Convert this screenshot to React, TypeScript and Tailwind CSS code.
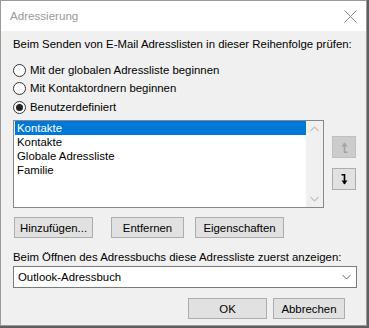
import React from "react";

const font = { fontFamily: '"Segoe UI", "Liberation Sans", Arial, sans-serif' };

function Radio({ checked, label }: { checked?: boolean; label: string }) {
  return (
    <div className="flex h-[18px] items-center">
      <span className="flex h-[13px] w-[13px] items-center justify-center rounded-full border border-[#333] bg-white">
        {checked && <span className="h-[7px] w-[7px] rounded-full bg-[#222]" />}
      </span>
      <span className="ml-[4px]">{label}</span>
    </div>
  );
}

function Btn({ children, w }: { children: React.ReactNode; w: string }) {
  return (
    <div
      className={`flex h-[21px] items-center justify-center border border-[#adadad] bg-[#e1e1e1] ${w}`}
    >
      {children}
    </div>
  );
}

// arrow with a small hook at the tail, drawn pointing down
function MoveArrow({ color, up }: { color: string; up?: boolean }) {
  return (
    <svg width="7" height="11" viewBox="0 0 7 11" className={up ? "rotate-180" : ""}>
      <path d="M0.5 0.8 H3.5 V10" fill="none" stroke={color} strokeWidth="1.6" />
      <path d="M0.5 6.5 L3.5 10.5 L6.5 6.5 Z" fill={color} />
    </svg>
  );
}

export default function App() {
  return (
    <div
      className="h-[328px] w-[369px] whitespace-nowrap bg-[#5f5f5f] text-[11.4px] leading-[16px] text-black"
      style={font}
    >
      <div className="flex h-[326px] w-[367px] flex-col border border-[#9a9a9a] bg-[#f0f0f0]">
        {/* title bar */}
        <div className="flex h-[30px] items-center justify-between bg-white pl-[9px] pr-[8px]">
          <span className="text-[11.6px] text-[#999]">Adressierung</span>
          <svg width="13" height="13" viewBox="0 0 13 13" className="mr-[1px]">
            <path d="M0.5 0.5 L12.5 12.5 M12.5 0.5 L0.5 12.5" stroke="#888" strokeWidth="1" />
          </svg>
        </div>

        <div className="flex flex-col pl-[12px] pr-[10px]">
          <div className="mt-[5px]">Beim Senden von E-Mail Adresslisten in dieser Reihenfolge prüfen:</div>

          <div className="mt-[9px] flex flex-col">
            <Radio label="Mit der globalen Adressliste beginnen" />
            <Radio label="Mit Kontaktordnern beginnen" />
            <div className="h-[1px]" />
            <Radio checked label="Benutzerdefiniert" />
          </div>

          {/* list + arrows */}
          <div className="mt-[4px] flex">
            <div className="flex h-[88px] w-[311px] border border-[#828790] bg-white">
              <div className="flex flex-1 flex-col pl-[1px]">
                <div className="h-[14px] bg-[#0078d7] pl-[2px] leading-[14px] text-white">Kontakte</div>
                <div className="h-[14px] pl-[2px] leading-[14px]">Kontakte</div>
                <div className="h-[14px] pl-[2px] leading-[14px]">Globale Adressliste</div>
                <div className="h-[14px] pl-[2px] leading-[14px]">Familie</div>
              </div>
              <div className="flex w-[17px] flex-col items-center justify-between bg-[#f0f0f0] py-[5px]">
                <svg width="9" height="6" viewBox="0 0 9 6">
                  <path d="M0.5 5 L4.5 1 L8.5 5" fill="none" stroke="#c2c2c2" strokeWidth="1.2" />
                </svg>
                <svg width="9" height="6" viewBox="0 0 9 6">
                  <path d="M0.5 1 L4.5 5 L8.5 1" fill="none" stroke="#c2c2c2" strokeWidth="1.2" />
                </svg>
              </div>
            </div>
            <div className="ml-[8px] flex flex-col pt-[16px]">
              <div className="flex h-[22px] w-[24px] items-center justify-center border border-[#bfbfbf] bg-[#cccccc]">
                <MoveArrow up color="#a3a3a3" />
              </div>
              <div className="mt-[10px] flex h-[22px] w-[24px] items-center justify-center border border-[#adadad] bg-[#e1e1e1]">
                <MoveArrow color="#000" />
              </div>
            </div>
          </div>

          {/* action buttons */}
          <div className="mt-[9px] flex">
            <Btn w="ml-[1px] w-[79px]">Hinzufügen...</Btn>
            <Btn w="ml-[18px] w-[73px]">Entfernen</Btn>
            <Btn w="ml-[11px] w-[89px]">Eigenschaften</Btn>
          </div>

          <div className="mt-[11px]">Beim Öffnen des Adressbuchs diese Adressliste zuerst anzeigen:</div>

          <div className="mt-[1px] flex h-[22px] w-[344px] items-center justify-between border border-[#7a7a7a] bg-white pl-[4px] pr-[5px]">
            <span>Outlook-Adressbuch</span>
            <svg width="9" height="6" viewBox="0 0 9 6">
              <path d="M0.5 1 L4.5 5 L8.5 1" fill="none" stroke="#666" strokeWidth="1" />
            </svg>
          </div>

          <div className="mt-[10px] flex justify-end pr-[11px]">
            <Btn w="w-[79px]">OK</Btn>
            <Btn w="ml-[6px] w-[72px]">Abbrechen</Btn>
          </div>
        </div>
      </div>
    </div>
  );
}
